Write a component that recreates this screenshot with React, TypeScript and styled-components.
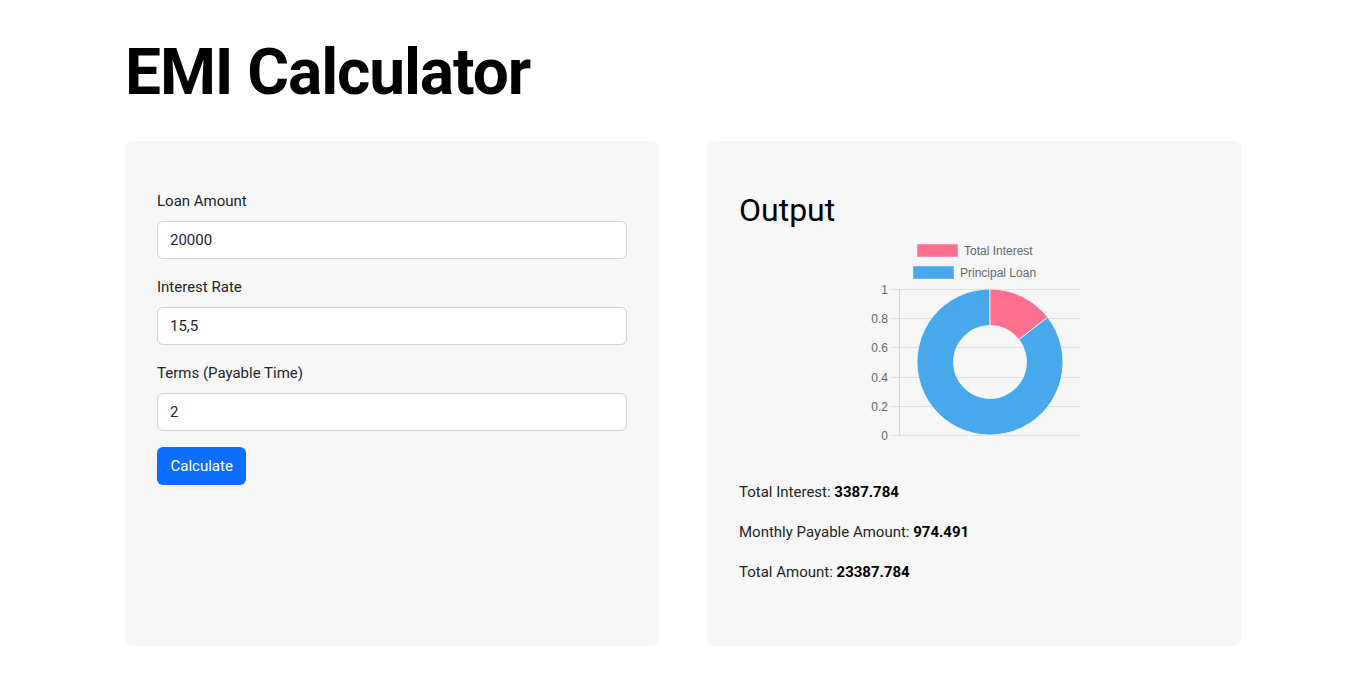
import styled, { createGlobalStyle } from 'styled-components';

const GlobalStyle = createGlobalStyle`
  * { box-sizing: border-box; }
  body {
    margin: 0;
    background: #fff;
    color: #212529;
    font-family: Roboto, "Noto Sans", Arial, sans-serif;
    font-size: 16px;
    line-height: 1.5;
  }
`;

const Container = styled.div`
  width: 1116px;
  margin: 0 auto;
  padding-top: 35px;
`;

const Title = styled.h1`
  margin: 0 0 29px;
  font-size: 64px;
  font-weight: 700;
  line-height: 1.2;
  color: #000;
  letter-spacing: -1.1px;
`;

const Columns = styled.div`
  display: grid;
  grid-template-columns: 1fr 1fr;
  gap: 48px;
`;

const Card = styled.div`
  background: #f7f7f7;
  border-radius: 7px;
  height: 505px;
  padding: 48px 32px 0;
`;

const Field = styled.div`
  margin-bottom: 16px;
`;

const Label = styled.label`
  display: block;
  margin-bottom: 8px;
  font-size: 15px;
  line-height: 24px;
  color: #212529;
`;

const Input = styled.input`
  display: block;
  width: 100%;
  height: 38px;
  padding: 6px 12px;
  font-family: inherit;
  font-size: 15px;
  line-height: 24px;
  color: #212529;
  background: #fff;
  border: 1px solid #ced4da;
  border-radius: 6px;
  outline: none;
`;

const Button = styled.button`
  height: 38px;
  padding: 6px 13.5px;
  font-family: inherit;
  font-size: 15px;
  line-height: 24px;
  color: #fff;
  background: #0d6efd;
  border: none;
  border-radius: 6px;
  cursor: pointer;
`;

const Heading = styled.h2`
  margin: 2px 0 0;
  font-size: 32px;
  font-weight: 400;
  line-height: 1.2;
  color: #000;
`;

const ChartBox = styled.div`
  display: flex;
  justify-content: center;
  margin-top: 9px;
`;

const Results = styled.div`
  margin-top: 36px;
`;

const ResultLine = styled.p`
  margin: 0 0 16px;
  font-size: 15px;
  line-height: 24px;
  color: #212529;

  b {
    font-weight: 700;
    color: #000;
  }
`;

const loan = 20000;
const interest = 3387.784;
const total = loan + interest;

const arc = (cx: number, cy: number, ro: number, ri: number, a0: number, a1: number) => {
  const p = (r: number, a: number) => [cx + r * Math.sin(a), cy - r * Math.cos(a)];
  const large = a1 - a0 > Math.PI ? 1 : 0;
  const [x0, y0] = p(ro, a0);
  const [x1, y1] = p(ro, a1);
  const [x2, y2] = p(ri, a1);
  const [x3, y3] = p(ri, a0);
  return `M${x0} ${y0} A${ro} ${ro} 0 ${large} 1 ${x1} ${y1} L${x2} ${y2} A${ri} ${ri} 0 ${large} 0 ${x3} ${y3} Z`;
};

function DoughnutChart() {
  const cx = 122;
  const cy = 124;
  const split = (interest / total) * Math.PI * 2;
  const ticks = ['1', '0.8', '0.6', '0.4', '0.2', '0'];
  const top = 51;
  const step = 29.2;
  return (
    <svg width="212" height="206" viewBox="0 0 212 206" fontFamily="'Liberation Sans', Arial, sans-serif" fontSize="12">
      <rect x="49.5" y="6.5" width="40" height="12" fill="#ff6f8e" stroke="#ff8fa8" />
      <text x="96" y="16.5" fill="#666">Total Interest</text>
      <rect x="45.5" y="28.5" width="40" height="12" fill="#47a9eb" stroke="#69b8ee" />
      <text x="92" y="38.5" fill="#666">Principal Loan</text>
      {ticks.map((t, i) => {
        const y = Math.round(top + i * step) + 0.5;
        return (
          <g key={t}>
            <line x1="23" x2="212" y1={y} y2={y} stroke="#e0e0e0" />
            <text x="20" y={y + 4} textAnchor="end" fill="#666">{t}</text>
          </g>
        );
      })}
      <line x1="31.5" x2="31.5" y1={top} y2={top + 5 * step + 1} stroke="#d6d6d6" />
      <path d={arc(cx, cy, 73, 36.5, split, Math.PI * 2 - 0.0001)} fill="#47a9eb" stroke="#f7f7f7" strokeWidth="0.8" />
      <path d={arc(cx, cy, 73, 36.5, 0, split)} fill="#ff6f8e" stroke="#f7f7f7" strokeWidth="0.8" />
    </svg>
  );
}

export default function App() {
  return (
    <>
      <GlobalStyle />
      <Container>
        <Title>EMI Calculator</Title>
        <Columns>
          <Card>
            <Field>
              <Label>Loan Amount</Label>
              <Input defaultValue="20000" />
            </Field>
            <Field>
              <Label>Interest Rate</Label>
              <Input defaultValue="15,5" />
            </Field>
            <Field>
              <Label>Terms (Payable Time)</Label>
              <Input defaultValue="2" />
            </Field>
            <Button>Calculate</Button>
          </Card>
          <Card>
            <Heading>Output</Heading>
            <ChartBox>
              <DoughnutChart />
            </ChartBox>
            <Results>
              <ResultLine>Total Interest: <b>3387.784</b></ResultLine>
              <ResultLine>Monthly Payable Amount: <b>974.491</b></ResultLine>
              <ResultLine>Total Amount: <b>23387.784</b></ResultLine>
            </Results>
          </Card>
        </Columns>
      </Container>
    </>
  );
}
